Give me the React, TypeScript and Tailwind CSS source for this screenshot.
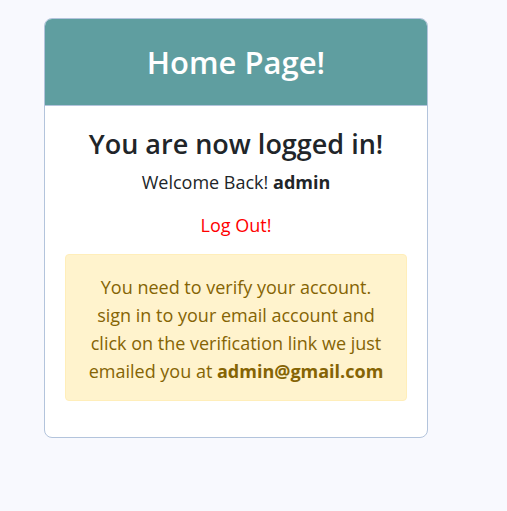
export default function App() {
  return (
    <div className="min-h-[511px] w-full bg-[#f8f9fe] pt-[18px] pl-[44px]" style={{ fontFamily: '"Open Sans", "Noto Sans", sans-serif' }}>
      <div className="w-[384px] rounded-[8px] border border-[#b3c4dc] bg-white overflow-hidden">
        <div className="flex h-[87px] items-center justify-center border-b border-[#b3c4dc] bg-[#5f9ea0]">
          <h1 className="text-[31px] font-semibold text-white leading-none">Home Page!</h1>
        </div>
        <div className="flex flex-col items-center px-[20px] pt-[22px] pb-[36px] text-[#212529]">
          <h2 className="text-[27px] font-semibold leading-[32px]">You are now logged in!</h2>
          <p className="mt-[9px] text-[18px] leading-[27px]">Welcome Back! <b>admin</b></p>
          <p className="mt-[16px] text-[18px] leading-[27px] text-[#ff0000]">Log Out!</p>
          <div className="mt-[15px] w-full rounded-[4px] border border-[#ffeeba] bg-[#fff3cd] px-[8px] pt-[18px] pb-[15px] text-center text-[18px] leading-[28px] text-[#856404]">
            You need to verify your account.<br />
            sign in to your email account and<br />
            click on the verification link we just<br />
            emailed you at <b>admin@gmail.com</b>
          </div>
        </div>
      </div>
    </div>
  );
}
